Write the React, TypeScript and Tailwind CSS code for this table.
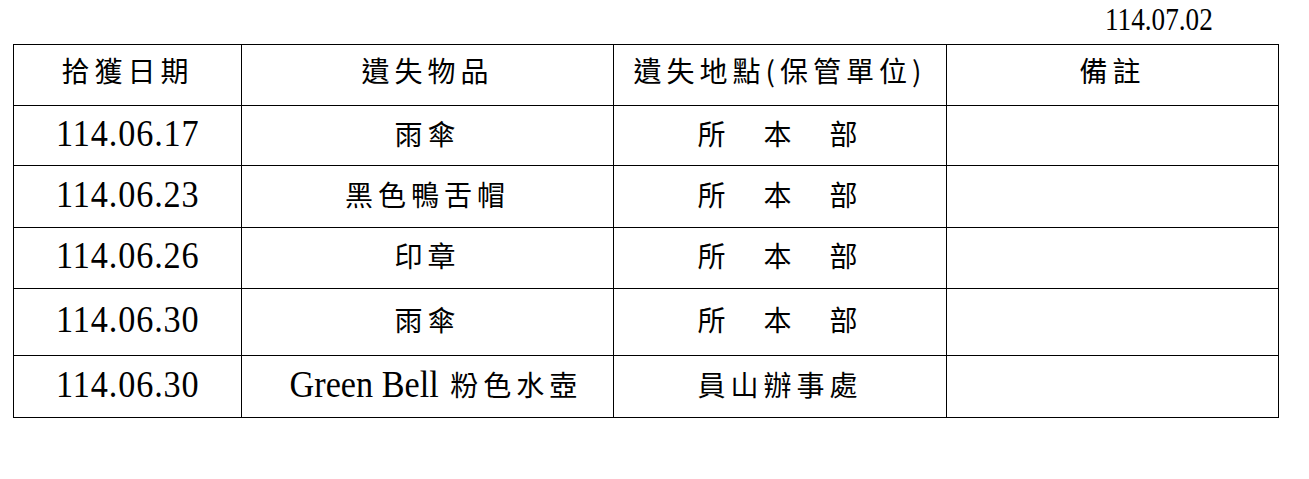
const rows = [
  { date: "114.06.17", item: "雨傘", place: "所　本　部", h: "h-[60px]" },
  { date: "114.06.23", item: "黑色鴨舌帽", place: "所　本　部", h: "h-[62px]" },
  { date: "114.06.26", item: "印章", place: "所　本　部", h: "h-[61px]" },
  { date: "114.06.30", item: "雨傘", place: "所　本　部", h: "h-[67px]" },
  { date: "114.06.30", item: "Green Bell 粉色水壺", place: "員山辦事處", h: "h-[62px]" },
];

const cjk = "font-['Noto_Sans_CJK_TC',sans-serif] text-[28px] tracking-[5px] leading-none";
const num =
  "inline-block scale-x-[0.9] font-['Liberation_Serif',serif] text-[38px] tracking-[1px] leading-none";

function Cell({ children, className = "" }: { children?: React.ReactNode; className?: string }) {
  return (
    <div className={`flex items-center justify-center border-r border-b border-black text-black ${className}`}>
      {children}
    </div>
  );
}

function ItemText({ text }: { text: string }) {
  // latin part is in a serif face, the rest in the CJK face
  const m = text.match(/^([A-Za-z ]+ )(.*)$/);
  if (!m) return <span className={cjk}>{text}</span>;
  return (
    <span className="flex items-center">
      <span className="inline-block origin-right scale-x-[0.9] font-['Liberation_Serif',serif] text-[38px] leading-none mr-[12px]">
        {m[1].trim()}
      </span>
      <span className={cjk}>{m[2]}</span>
    </span>
  );
}

export default function App() {
  return (
    <div className="w-[1309px] h-[479px] bg-white">
      <div className="h-[44px] pr-[96px] pt-[3px] flex justify-end">
        <span className="inline-block origin-right scale-x-[0.85] font-['Liberation_Serif',serif] text-[32px] leading-none text-black">
          114.07.02
        </span>
      </div>
      <div className="ml-[13px] w-[1266px] border-t border-l border-black grid grid-cols-[228px_372px_333px_332px]">
        <Cell className="h-[61px] pb-[10px]"><span className={cjk}>拾獲日期</span></Cell>
        <Cell className="h-[61px] pb-[10px]"><span className={cjk}>遺失物品</span></Cell>
        <Cell className="h-[61px] pb-[10px]"><span className={cjk}>遺失地點(保管單位)</span></Cell>
        <Cell className="h-[61px] pb-[10px]"><span className={cjk}>備註</span></Cell>
        {rows.map((r, i) => (
          <div key={i} className="contents">
            <Cell className={`${r.h} pb-[6px]`}><span className={num}>{r.date}</span></Cell>
            <Cell className={`${r.h} pb-[6px]`}><ItemText text={r.item} /></Cell>
            <Cell className={`${r.h} pb-[6px]`}><span className={cjk}>{r.place}</span></Cell>
            <Cell className={r.h} />
          </div>
        ))}
      </div>
    </div>
  );
}
